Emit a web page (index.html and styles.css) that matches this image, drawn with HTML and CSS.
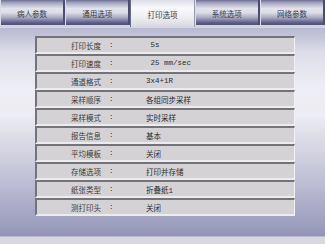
FILE: index.html
```html
<!DOCTYPE html>
<html lang="zh-CN">

<head>
    <meta charset="UTF-8">
    <title>打印选项</title>
    <link rel="stylesheet" href="styles.css">
</head>

<body>
    <div class="screen">
        <nav class="tabs">
            <div class="tab">病人参数</div>
            <div class="tab">通用选项</div>
            <div class="tab active">打印选项</div>
            <div class="tab">系统选项</div>
            <div class="tab">网络参数</div>
        </nav>
        <div class="tab-gap"></div>

        <section class="panel">
            <div class="row"><span class="label">打印长度</span><span class="colon">:</span><span class="value">&nbsp;5s</span></div>
            <div class="row"><span class="label">打印速度</span><span class="colon">:</span><span class="value">&nbsp;25 mm/sec</span></div>
            <div class="row"><span class="label">通道格式</span><span class="colon">:</span><span class="value">3x4+1R</span></div>
            <div class="row"><span class="label">采样顺序</span><span class="colon">:</span><span class="value">各组同步采样</span></div>
            <div class="row"><span class="label">采样模式</span><span class="colon">:</span><span class="value">实时采样</span></div>
            <div class="row"><span class="label">报告信息</span><span class="colon">:</span><span class="value">基本</span></div>
            <div class="row"><span class="label">平均模板</span><span class="colon">:</span><span class="value">关闭</span></div>
            <div class="row"><span class="label">存储选项</span><span class="colon">:</span><span class="value">打印并存储</span></div>
            <div class="row"><span class="label">纸张类型</span><span class="colon">:</span><span class="value">折叠纸1</span></div>
            <div class="row"><span class="label">测打印头</span><span class="colon">:</span><span class="value">关闭</span></div>
        </section>

        <div class="status-strip"></div>
    </div>
</body>

</html>
```

FILE: styles.css
```css
body {
    margin: 0;
    background-color: #d6d6de;
    font-family: "Liberation Mono", "Noto Sans CJK SC", monospace;
    font-size: 7.5px;
    color: #333;
}

.screen {
    width: 325px;
    height: 244px;
    overflow: hidden;
}

.tabs {
    display: flex;
    height: 25px;
}

.tab {
    flex: 1;
    display: flex;
    align-items: center;
    justify-content: center;
    padding-top: 2px;
    box-sizing: border-box;
    border-left: 1px solid #dcdce8;
    border-right: 2px solid #4c4c74;
    background: linear-gradient(#6e6e94 0%, #a8a8c0 12%, #e2e2ec 34%, #dedee8 50%, #a4a4be 72%, #5a5a82 92%, #50507a 100%);
    font-family: "Noto Sans CJK SC", sans-serif;
    color: #3a3a44;
}

.tab.active {
    height: 27px;
    border-left: 1px solid #6a6a8a;
    border-right: 1px solid #9a9ab4;
    background: linear-gradient(#dcdce6 0%, #fafafc 30%, #f0f0f4 60%, #d8d8e2 100%);
}

.tab-gap {
    height: 3px;
    background-color: #d4d4de;
}

.panel {
    height: 208px;
    box-sizing: border-box;
    padding: 8px 30px 0 35px;
    background: linear-gradient(#b8b8d0 0%, #dedeea 12%, #eeeef4 30%, #ececf2 42%, #cacadc 66%, #a8a8c6 88%, #9494b8 100%);
}

.row {
    display: grid;
    grid-template-columns: 64px 45px 1fr;
    align-items: center;
    height: 18px;
    box-sizing: border-box;
    border-top: 2px solid #747478;
    border-left: 2px solid #747478;
    border-right: 1px solid #f2f2f4;
    border-bottom: 2px solid #ececf0;
    background-color: #d4d2d4;
}

.label {
    text-align: right;
    font-family: "Noto Sans CJK SC", sans-serif;
    color: #3c3c3c;
}

.colon {
    padding-left: 8px;
}

.value {
    font-family: "Liberation Mono", "Noto Sans CJK SC", monospace;
    color: #2e2e2e;
}

.status-strip {
    height: 8px;
    border-top: 1px solid #b8b8c8;
    background-color: #d8d8e0;
}
```
